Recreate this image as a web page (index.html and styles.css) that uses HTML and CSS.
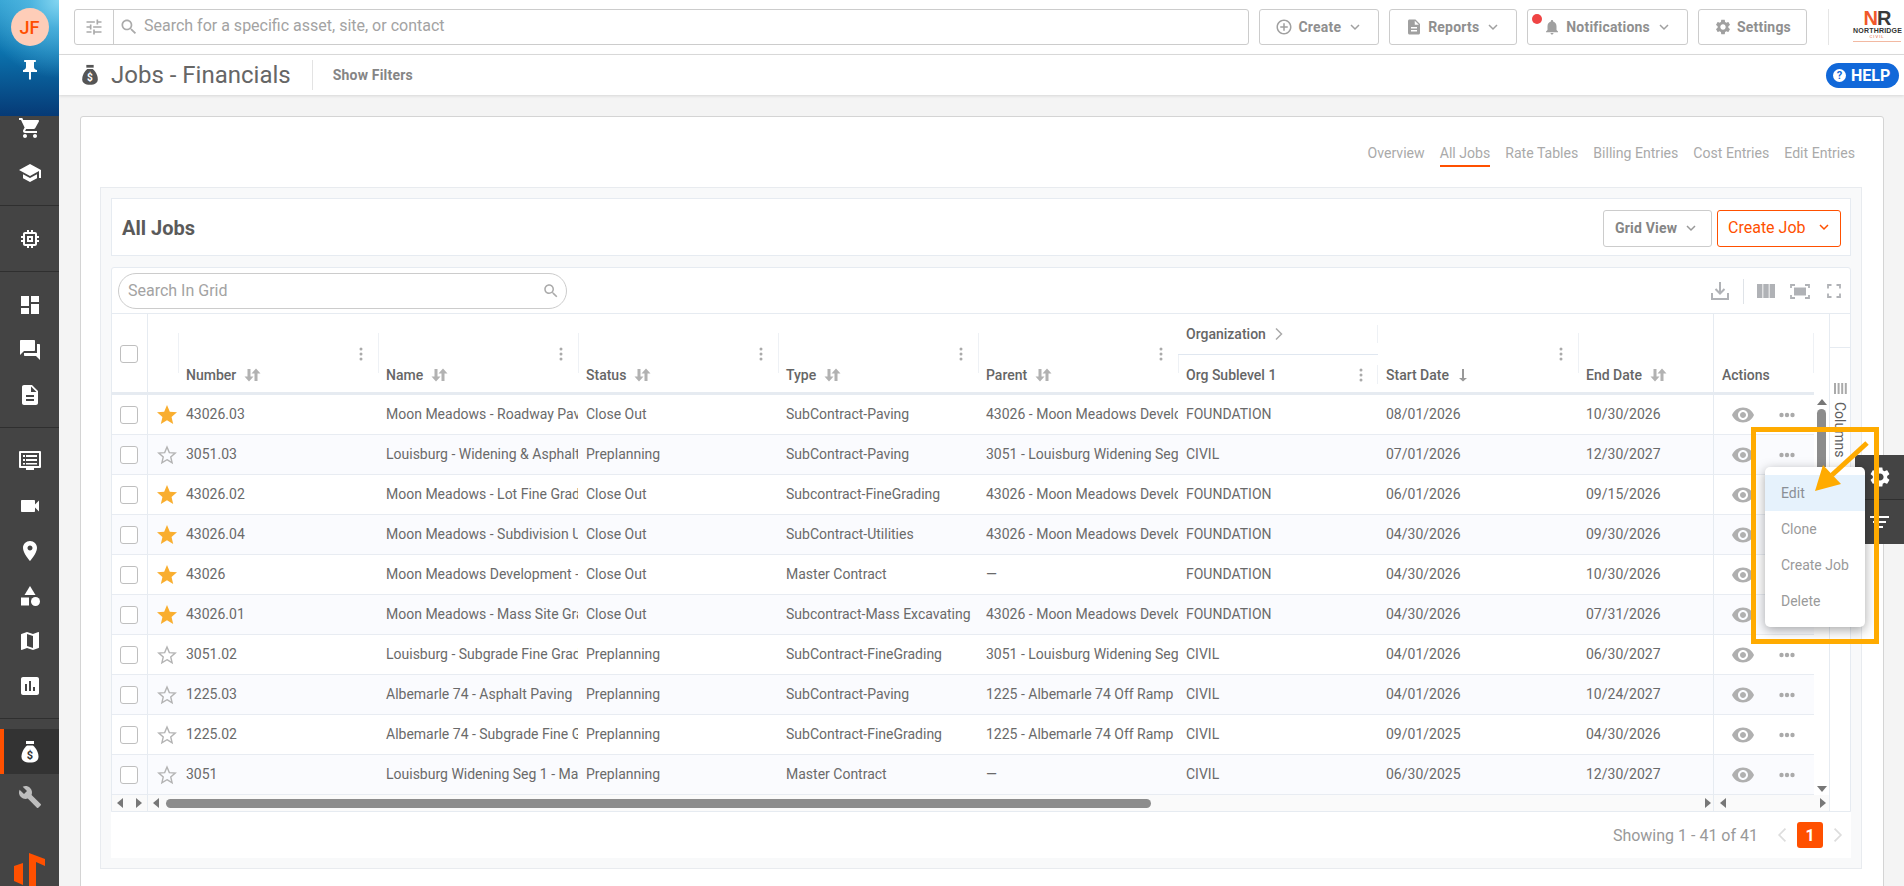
FILE: index.html
```html
<!DOCTYPE html>
<html lang="en">
<head>
<meta charset="UTF-8" />
<meta name="viewport" content="width=device-width, initial-scale=1.0">
<title>Jobs - Financials</title>
<link rel="stylesheet" href="styles.css">
</head>
<body>

<svg class="sprite" xmlns="http://www.w3.org/2000/svg">
  <symbol id="i-cart" viewBox="0 0 24 24"><path d="M7 18c-1.1 0-1.99.9-1.99 2S5.9 22 7 22s2-.9 2-2-.9-2-2-2zM1 2v2h2l3.6 7.59-1.35 2.45c-.16.28-.25.61-.25.96 0 1.1.9 2 2 2h12v-2H7.42c-.14 0-.25-.11-.25-.25l.03-.12.9-1.63h7.45c.75 0 1.41-.41 1.75-1.03l3.58-6.49c.08-.14.12-.31.12-.48 0-.55-.45-1-1-1H5.21l-.94-2H1zm16 16c-1.1 0-1.99.9-1.99 2s.89 2 1.99 2 2-.9 2-2-.9-2-2-2z"/></symbol>
  <symbol id="i-school" viewBox="0 0 24 24"><path d="M5 13.18v4L12 21l7-3.82v-4L12 17l-7-3.82zM12 3L1 9l11 6 9-4.91V17h2V9L12 3z"/></symbol>
  <symbol id="i-chip" viewBox="0 0 24 24"><path d="M15 9H9v6h6V9zm-2 4h-2v-2h2v2zm8-2V9h-2V7c0-1.1-.9-2-2-2h-2V3h-2v2h-2V3H9v2H7c-1.1 0-2 .9-2 2v2H3v2h2v2H3v2h2v2c0 1.1.9 2 2 2h2v2h2v-2h2v2h2v-2h2c1.1 0 2-.9 2-2v-2h2v-2h-2v-2h2zm-4 6H7V7h10v10z"/></symbol>
  <symbol id="i-dash" viewBox="0 0 24 24"><path d="M3 13h8V3H3v10zm0 8h8v-6H3v6zm10 0h8V11h-8v10zm0-18v6h8V3h-8z"/></symbol>
  <symbol id="i-forum" viewBox="0 0 24 24"><path d="M21 6h-2v9H6v2c0 .55.45 1 1 1h11l4 4V7c0-.55-.45-1-1-1zm-4 6V3c0-.55-.45-1-1-1H3c-.55 0-1 .45-1 1v14l4-4h10c.55 0 1-.45 1-1z"/></symbol>
  <symbol id="i-doc" viewBox="0 0 24 24"><path d="M14 2H6c-1.1 0-1.99.9-1.99 2L4 20c0 1.1.89 2 1.99 2H18c1.1 0 2-.9 2-2V8l-6-6zm2 16H8v-2h8v2zm0-4H8v-2h8v2zm-3-5V3.5L18.5 9H13z"/></symbol>
  <symbol id="i-screen" viewBox="0 0 24 24"><path fill-rule="evenodd" d="M2 2h20a1 1 0 0 1 1 1v15a1 1 0 0 1-1 1h-6v2H8v-2H2a1 1 0 0 1-1-1V3a1 1 0 0 1 1-1zm1 2v13h18V4H3z"/><path d="M5 6h2v2H5zM8 6h11v2H8zM5 10h2v2H5zM8 10h11v2H8zM5 14h2v1.5H5zM8 14h11v1.5H8z"/></symbol>
  <symbol id="i-video" viewBox="0 0 24 24"><path d="M17 10.5V7c0-.55-.45-1-1-1H4c-.55 0-1 .45-1 1v10c0 .55.45 1 1 1h12c.55 0 1-.45 1-1v-3.5l4 4v-11l-4 4z"/></symbol>
  <symbol id="i-place" viewBox="0 0 24 24"><path d="M12 2C8.13 2 5 5.13 5 9c0 5.25 7 13 7 13s7-7.75 7-13c0-3.87-3.13-7-7-7zm0 9.5c-1.38 0-2.5-1.12-2.5-2.5s1.12-2.5 2.5-2.5 2.5 1.12 2.5 2.5-1.12 2.5-2.5 2.5z"/></symbol>
  <symbol id="i-shapes" viewBox="0 0 24 24"><path d="M12 2l-5.5 9h11z"/><circle cx="17.5" cy="17.5" r="4.5"/><path d="M3 13.5h8v8H3z"/></symbol>
  <symbol id="i-map" viewBox="0 0 24 24"><path d="M20.5 3l-.16.03L15 5.1 9 3 3.36 4.9c-.21.07-.36.25-.36.48V20.5c0 .28.22.5.5.5l.16-.03L9 18.9l6 2.1 5.64-1.9c.21-.07.36-.25.36-.48V3.5c0-.28-.22-.5-.5-.5zM15 19l-6-2.11V5l6 2.11V19z"/></symbol>
  <symbol id="i-chart" viewBox="0 0 24 24"><path d="M19 3H5c-1.1 0-2 .9-2 2v14c0 1.1.9 2 2 2h14c1.1 0 2-.9 2-2V5c0-1.1-.9-2-2-2zM9 17H7v-7h2v7zm4 0h-2V7h2v10zm4 0h-2v-4h2v4z"/></symbol>
  <symbol id="i-wrench" viewBox="0 0 24 24"><path d="M22.7 19l-9.1-9.1c.9-2.3.4-5-1.5-6.9-2-2-5-2.4-7.4-1.3L9 6 6 9 1.6 4.7C.4 7.1.9 10.1 2.9 12.1c1.9 1.9 4.6 2.4 6.9 1.5l9.1 9.1c.4.4 1 .4 1.4 0l2.3-2.3c.5-.4.5-1.1.1-1.4z"/></symbol>
  <symbol id="i-pin" viewBox="0 0 24 24"><path d="M16 9V4h1c.55 0 1-.45 1-1s-.45-1-1-1H7c-.55 0-1 .45-1 1s.45 1 1 1h1v5c0 1.66-1.34 3-3 3v2h5.97v7l1 1 1-1v-7H19v-2c-1.66 0-3-1.34-3-3z"/></symbol>
  <symbol id="i-bag" viewBox="0 0 24 24"><path d="M8 1h8v3H8z"/><path d="M9 5.5h6c3 2.5 5.5 7 5.5 11 0 4-3 6-8.5 6s-8.5-2-8.5-6c0-4 2.5-8.5 5.5-11z"/><text class="bag-sign" x="12" y="19" text-anchor="middle">$</text></symbol>
  <symbol id="i-tune" viewBox="0 0 24 24"><path d="M3 17v2h6v-2H3zM3 5v2h10V5H3zm10 16v-2h8v-2h-8v-2h-2v6h2zM7 9v2H3v2h4v2h2V9H7zm14 4v-2H11v2h10zm-6-4h2V7h4V5h-4V3h-2v6z"/></symbol>
  <symbol id="i-search" viewBox="0 0 24 24"><path d="M15.5 14h-.79l-.28-.27C15.41 12.59 16 11.11 16 9.5 16 5.91 13.09 3 9.5 3S3 5.91 3 9.5 5.91 16 9.5 16c1.61 0 3.09-.59 4.23-1.57l.27.28v.79l5 4.99L20.49 19l-4.99-5zm-6 0C7.01 14 5 11.99 5 9.5S7.01 5 9.5 5 14 7.01 14 9.5 11.99 14 9.5 14z"/></symbol>
  <symbol id="i-add" viewBox="0 0 24 24"><path d="M13 7h-2v4H7v2h4v4h2v-4h4v-2h-4V7zm-1-5C6.48 2 2 6.48 2 12s4.48 10 10 10 10-4.48 10-10S17.52 2 12 2zm0 18c-4.41 0-8-3.59-8-8s3.59-8 8-8 8 3.59 8 8-3.59 8-8 8z"/></symbol>
  <symbol id="i-bell" viewBox="0 0 24 24"><path d="M12 22c1.1 0 2-.9 2-2h-4c0 1.1.89 2 2 2zm6-6v-5c0-3.07-1.64-5.64-4.5-6.32V4c0-.83-.67-1.5-1.5-1.5s-1.5.67-1.5 1.5v.68C7.63 5.36 6 7.92 6 11v5l-2 2v1h16v-1l-2-2z"/></symbol>
  <symbol id="i-gear" viewBox="0 0 24 24"><path d="M19.14 12.94c.04-.3.06-.61.06-.94 0-.32-.02-.64-.07-.94l2.03-1.58c.18-.14.23-.41.12-.61l-1.92-3.32c-.12-.22-.37-.29-.59-.22l-2.39.96c-.5-.38-1.03-.7-1.62-.94l-.36-2.54c-.04-.24-.24-.41-.48-.41h-3.84c-.24 0-.43.17-.47.41l-.36 2.54c-.59.24-1.13.57-1.62.94l-2.39-.96c-.22-.08-.47 0-.59.22L2.74 8.87c-.12.21-.08.47.12.61l2.03 1.58c-.05.3-.09.63-.09.94s.02.64.07.94l-2.03 1.58c-.18.14-.23.41-.12.61l1.92 3.32c.12.22.37.29.59.22l2.39-.96c.5.38 1.03.7 1.62.94l.36 2.54c.05.24.24.41.48.41h3.84c.24 0 .44-.17.47-.41l.36-2.54c.59-.24 1.13-.56 1.62-.94l2.39.96c.22.08.47 0 .59-.22l1.92-3.32c.12-.22.07-.47-.12-.61l-2.01-1.58zM12 15.6c-1.98 0-3.6-1.62-3.6-3.6s1.62-3.6 3.6-3.6 3.6 1.62 3.6 3.6-1.62 3.6-3.6 3.6z"/></symbol>
  <symbol id="i-chev" viewBox="0 0 12 12"><path d="M2 4l4 4 4-4" fill="none" stroke="currentColor" stroke-width="1.5"/></symbol>
  <symbol id="i-eye" viewBox="0 0 24 24"><path d="M12 4.5C7 4.5 2.73 7.61 1 12c1.73 4.39 6 7.5 11 7.5s9.27-3.11 11-7.5c-1.73-4.39-6-7.5-11-7.5zM12 17c-2.76 0-5-2.24-5-5s2.24-5 5-5 5 2.24 5 5-2.24 5-5 5zm0-8c-1.66 0-3 1.34-3 3s1.34 3 3 3 3-1.34 3-3-1.34-3-3-3z"/></symbol>
  <symbol id="i-star" viewBox="0 0 24 24"><path d="M12 17.27L18.18 21l-1.64-7.03L22 9.24l-7.19-.61L12 2 9.19 8.63 2 9.24l5.46 4.73L5.82 21z"/></symbol>
  <symbol id="i-star-o" viewBox="0 0 24 24"><path d="M12 16.7L17.1 19.8l-1.35-5.8 4.5-3.9-5.93-.5L12 4.1 9.68 9.6l-5.93.5 4.5 3.9-1.35 5.8z" fill="none" stroke="currentColor" stroke-width="1.4"/></symbol>
  <symbol id="i-more" viewBox="0 0 16 6"><circle cx="2.5" cy="3" r="2.2"/><circle cx="8" cy="3" r="2.2"/><circle cx="13.5" cy="3" r="2.2"/></symbol>
  <symbol id="i-vdots" viewBox="0 0 4 14"><circle cx="2" cy="2" r="1.5"/><circle cx="2" cy="7" r="1.5"/><circle cx="2" cy="12" r="1.5"/></symbol>
  <symbol id="i-sort" viewBox="0 0 17 14"><path d="M3.5 1h3v7.5h3L5 13.5.5 8.5h3zM10.5 13h3V5.500h3L12 .5 7.500 5.500h3z"/></symbol>
  <symbol id="i-down" viewBox="0 0 12 14"><path d="M5 1h2v9h3l-4 3.500L2 10h3z"/></symbol>
  <symbol id="i-right" viewBox="0 0 10 14"><path d="M2 1.500L7.500 7 2 12.500" fill="none" stroke="currentColor" stroke-width="1.500"/></symbol>
  <symbol id="i-left" viewBox="0 0 10 14"><path d="M8 1.500L2.500 7 8 12.500" fill="none" stroke="currentColor" stroke-width="1.500"/></symbol>
  <symbol id="i-columns" viewBox="0 0 18 14"><path d="M0 0h5.400v14H0zM6.300 0h5.400v14H6.300zM12.600 0H18v14h-5.400z"/></symbol>
  <symbol id="i-download" viewBox="0 0 20 20"><path d="M10 1v11M5.500 8l4.500 4.500L14.500 8" fill="none" stroke="currentColor" stroke-width="2"/><path d="M2 12v6h16v-6" fill="none" stroke="currentColor" stroke-width="2"/></symbol>
  <symbol id="i-fit" viewBox="0 0 20 15"><path d="M1 4V1h4M15 1h4v3M19 11v3h-4M5 14H1v-3" fill="none" stroke="currentColor" stroke-width="1.800"/><path d="M4 3.500h12v8H4z"/></symbol>
  <symbol id="i-full" viewBox="0 0 14 14"><path d="M1 4.500V1h3.500M9.500 1H13v3.500M13 9.500V13H9.500M4.500 13H1V9.500" fill="none" stroke="currentColor" stroke-width="1.800"/></symbol>
  <symbol id="i-bars" viewBox="0 0 13 11"><path d="M0 0h2v11H0zM3.600 0h2v11h-2zM7.200 0h2v11h-2zM10.800 0h2v11h-2z"/></symbol>
</svg>

<!-- Side nav -->
<nav class="sidebar">
  <div class="side-top">
    <div class="avatar">JF</div>
    <svg class="side-pin"><use href="#i-pin"/></svg>
  </div>
  <div class="side-group">
    <svg class="side-icon"><use href="#i-cart"/></svg>
    <svg class="side-icon"><use href="#i-school"/></svg>
  </div>
  <div class="side-group">
    <svg class="side-icon"><use href="#i-chip"/></svg>
  </div>
  <div class="side-group">
    <svg class="side-icon"><use href="#i-dash"/></svg>
    <svg class="side-icon"><use href="#i-forum"/></svg>
    <svg class="side-icon"><use href="#i-doc"/></svg>
  </div>
  <div class="side-group">
    <svg class="side-icon"><use href="#i-screen"/></svg>
    <svg class="side-icon"><use href="#i-video"/></svg>
    <svg class="side-icon"><use href="#i-place"/></svg>
    <svg class="side-icon"><use href="#i-shapes"/></svg>
    <svg class="side-icon"><use href="#i-map"/></svg>
    <svg class="side-icon"><use href="#i-chart"/></svg>
  </div>
  <div class="side-last">
    <div class="side-active"><svg class="side-icon"><use href="#i-bag"/></svg></div>
    <svg class="side-icon side-wrench"><use href="#i-wrench"/></svg>
  </div>
  <svg class="side-logo" viewBox="0 0 59 33"><path d="M14 13l9-3v22l-9-4zM29 0l16 6v7l-9-4v24h-7z"/></svg>
</nav>

<div class="main">
  <!-- Top bar -->
  <header class="topbar">
    <div class="global-search">
      <div class="tune-cell"><svg class="tune"><use href="#i-tune"/></svg></div>
      <svg class="search-icon"><use href="#i-search"/></svg>
      <span>Search for a specific asset, site, or contact</span>
    </div>
    <button class="top-btn"><svg><use href="#i-add"/></svg>Create<svg class="chev"><use href="#i-chev"/></svg></button>
    <button class="top-btn"><svg><use href="#i-doc"/></svg>Reports<svg class="chev"><use href="#i-chev"/></svg></button>
    <button class="top-btn notif"><span class="red-dot"></span><svg><use href="#i-bell"/></svg>Notifications<svg class="chev"><use href="#i-chev"/></svg></button>
    <button class="top-btn settings"><svg><use href="#i-gear"/></svg>Settings</button>
    <div class="top-sep"></div>
    <div class="brand">
      <div class="brand-nr"><span class="brand-n">N</span><span>R</span></div>
      <div class="brand-name">NORTHRIDGE</div>
      <div class="brand-civil">CIVIL</div>
    </div>
  </header>

  <!-- Page title -->
  <div class="subheader">
    <svg class="title-icon"><use href="#i-bag"/></svg>
    <h1>Jobs - Financials</h1>
    <div class="sub-sep"></div>
    <span class="show-filters">Show Filters</span>
    <div class="help"><span class="help-mark">?</span>HELP</div>
  </div>

  <div class="content">
    <div class="card">
      <div class="tabs">
        <span>Overview</span>
        <span class="tab-active">All Jobs</span>
        <span>Rate Tables</span>
        <span>Billing Entries</span>
        <span>Cost Entries</span>
        <span>Edit Entries</span>
      </div>

      <div class="panel">
        <div class="panel-head">
          <h2>All Jobs</h2>
          <div class="panel-actions">
            <button class="grid-view">Grid View<svg class="chev"><use href="#i-chev"/></svg></button>
            <button class="create-job">Create Job<svg class="chev"><use href="#i-chev"/></svg></button>
          </div>
        </div>

        <div class="grid">
          <div class="grid-tools">
            <div class="grid-search">
              <span>Search In Grid</span>
              <svg><use href="#i-search"/></svg>
            </div>
            <div class="tool-icons">
              <svg class="t-download"><use href="#i-download"/></svg>
              <div class="tool-sep"></div>
              <svg class="t-columns"><use href="#i-columns"/></svg>
              <svg class="t-fit"><use href="#i-fit"/></svg>
              <svg class="t-full"><use href="#i-full"/></svg>
            </div>
          </div>

          <div class="grid-body">
            <div class="grid-main">
              <div class="grid-upper">
                <div class="table">
                  <div class="thead">
                    <div class="hcell-check"><span class="check"></span></div>
                    <div class="hcell-star"></div>
                    <div class="hcell"><span>Number</span><svg class="sort"><use href="#i-sort"/></svg><svg class="vdots"><use href="#i-vdots"/></svg></div>
                    <div class="hcell"><span>Name</span><svg class="sort"><use href="#i-sort"/></svg><svg class="vdots"><use href="#i-vdots"/></svg></div>
                    <div class="hcell"><span>Status</span><svg class="sort"><use href="#i-sort"/></svg><svg class="vdots"><use href="#i-vdots"/></svg></div>
                    <div class="hcell"><span>Type</span><svg class="sort"><use href="#i-sort"/></svg><svg class="vdots"><use href="#i-vdots"/></svg></div>
                    <div class="hcell"><span>Parent</span><svg class="sort"><use href="#i-sort"/></svg><svg class="vdots"><use href="#i-vdots"/></svg></div>
                    <div class="hcell-org">
                      <div class="org-group"><span>Organization</span><svg><use href="#i-right"/></svg></div>
                      <div class="org-sub"><span>Org Sublevel 1</span><svg class="vdots"><use href="#i-vdots"/></svg></div>
                    </div>
                    <div class="hcell no-line"><span>Start Date</span><svg class="sort-down"><use href="#i-down"/></svg><svg class="vdots"><use href="#i-vdots"/></svg></div>
                    <div class="hcell"><span>End Date</span><svg class="sort"><use href="#i-sort"/></svg></div>
                    <div class="hcell-actions"><span>Actions</span></div>
                  </div>

                  <div class="row">
                    <div class="cell-check"><span class="check"></span></div>
                    <div class="cell-star"><svg class="star"><use href="#i-star"/></svg></div>
                    <div class="cell">43026.03</div>
                    <div class="cell">Moon Meadows - Roadway Paving</div>
                    <div class="cell">Close Out</div>
                    <div class="cell">SubContract-Paving</div>
                    <div class="cell">43026 - Moon Meadows Development</div>
                    <div class="cell">FOUNDATION</div>
                    <div class="cell">08/01/2026</div>
                    <div class="cell">10/30/2026</div>
                    <div class="cell-actions"><svg class="eye"><use href="#i-eye"/></svg><svg class="more"><use href="#i-more"/></svg></div>
                  </div>
                  <div class="row alt">
                    <div class="cell-check"><span class="check"></span></div>
                    <div class="cell-star"><svg class="star-o"><use href="#i-star-o"/></svg></div>
                    <div class="cell">3051.03</div>
                    <div class="cell">Louisburg - Widening &amp; Asphalt Paving</div>
                    <div class="cell">Preplanning</div>
                    <div class="cell">SubContract-Paving</div>
                    <div class="cell">3051 - Louisburg Widening Seg 1</div>
                    <div class="cell">CIVIL</div>
                    <div class="cell">07/01/2026</div>
                    <div class="cell">12/30/2027</div>
                    <div class="cell-actions"><svg class="eye"><use href="#i-eye"/></svg><svg class="more"><use href="#i-more"/></svg></div>
                  </div>
                  <div class="row">
                    <div class="cell-check"><span class="check"></span></div>
                    <div class="cell-star"><svg class="star"><use href="#i-star"/></svg></div>
                    <div class="cell">43026.02</div>
                    <div class="cell">Moon Meadows - Lot Fine Grading</div>
                    <div class="cell">Close Out</div>
                    <div class="cell">Subcontract-FineGrading</div>
                    <div class="cell">43026 - Moon Meadows Development</div>
                    <div class="cell">FOUNDATION</div>
                    <div class="cell">06/01/2026</div>
                    <div class="cell">09/15/2026</div>
                    <div class="cell-actions"><svg class="eye"><use href="#i-eye"/></svg><svg class="more"><use href="#i-more"/></svg></div>
                  </div>
                  <div class="row alt">
                    <div class="cell-check"><span class="check"></span></div>
                    <div class="cell-star"><svg class="star"><use href="#i-star"/></svg></div>
                    <div class="cell">43026.04</div>
                    <div class="cell">Moon Meadows - Subdivision Utilities</div>
                    <div class="cell">Close Out</div>
                    <div class="cell">SubContract-Utilities</div>
                    <div class="cell">43026 - Moon Meadows Development</div>
                    <div class="cell">FOUNDATION</div>
                    <div class="cell">04/30/2026</div>
                    <div class="cell">09/30/2026</div>
                    <div class="cell-actions"><svg class="eye"><use href="#i-eye"/></svg><svg class="more"><use href="#i-more"/></svg></div>
                  </div>
                  <div class="row">
                    <div class="cell-check"><span class="check"></span></div>
                    <div class="cell-star"><svg class="star"><use href="#i-star"/></svg></div>
                    <div class="cell">43026</div>
                    <div class="cell">Moon Meadows Development - Master</div>
                    <div class="cell">Close Out</div>
                    <div class="cell">Master Contract</div>
                    <div class="cell">—</div>
                    <div class="cell">FOUNDATION</div>
                    <div class="cell">04/30/2026</div>
                    <div class="cell">10/30/2026</div>
                    <div class="cell-actions"><svg class="eye"><use href="#i-eye"/></svg><svg class="more"><use href="#i-more"/></svg></div>
                  </div>
                  <div class="row alt">
                    <div class="cell-check"><span class="check"></span></div>
                    <div class="cell-star"><svg class="star"><use href="#i-star"/></svg></div>
                    <div class="cell">43026.01</div>
                    <div class="cell">Moon Meadows - Mass Site Grading</div>
                    <div class="cell">Close Out</div>
                    <div class="cell">Subcontract-Mass Excavating</div>
                    <div class="cell">43026 - Moon Meadows Development</div>
                    <div class="cell">FOUNDATION</div>
                    <div class="cell">04/30/2026</div>
                    <div class="cell">07/31/2026</div>
                    <div class="cell-actions"><svg class="eye"><use href="#i-eye"/></svg><svg class="more"><use href="#i-more"/></svg></div>
                  </div>
                  <div class="row">
                    <div class="cell-check"><span class="check"></span></div>
                    <div class="cell-star"><svg class="star-o"><use href="#i-star-o"/></svg></div>
                    <div class="cell">3051.02</div>
                    <div class="cell">Louisburg - Subgrade Fine Grading</div>
                    <div class="cell">Preplanning</div>
                    <div class="cell">SubContract-FineGrading</div>
                    <div class="cell">3051 - Louisburg Widening Seg 1</div>
                    <div class="cell">CIVIL</div>
                    <div class="cell">04/01/2026</div>
                    <div class="cell">06/30/2027</div>
                    <div class="cell-actions"><svg class="eye"><use href="#i-eye"/></svg><svg class="more"><use href="#i-more"/></svg></div>
                  </div>
                  <div class="row alt">
                    <div class="cell-check"><span class="check"></span></div>
                    <div class="cell-star"><svg class="star-o"><use href="#i-star-o"/></svg></div>
                    <div class="cell">1225.03</div>
                    <div class="cell">Albemarle 74 - Asphalt Paving</div>
                    <div class="cell">Preplanning</div>
                    <div class="cell">SubContract-Paving</div>
                    <div class="cell">1225 - Albemarle 74 Off Ramp</div>
                    <div class="cell">CIVIL</div>
                    <div class="cell">04/01/2026</div>
                    <div class="cell">10/24/2027</div>
                    <div class="cell-actions"><svg class="eye"><use href="#i-eye"/></svg><svg class="more"><use href="#i-more"/></svg></div>
                  </div>
                  <div class="row">
                    <div class="cell-check"><span class="check"></span></div>
                    <div class="cell-star"><svg class="star-o"><use href="#i-star-o"/></svg></div>
                    <div class="cell">1225.02</div>
                    <div class="cell">Albemarle 74 - Subgrade Fine Grading</div>
                    <div class="cell">Preplanning</div>
                    <div class="cell">SubContract-FineGrading</div>
                    <div class="cell">1225 - Albemarle 74 Off Ramp</div>
                    <div class="cell">CIVIL</div>
                    <div class="cell">09/01/2025</div>
                    <div class="cell">04/30/2026</div>
                    <div class="cell-actions"><svg class="eye"><use href="#i-eye"/></svg><svg class="more"><use href="#i-more"/></svg></div>
                  </div>
                  <div class="row alt">
                    <div class="cell-check"><span class="check"></span></div>
                    <div class="cell-star"><svg class="star-o"><use href="#i-star-o"/></svg></div>
                    <div class="cell">3051</div>
                    <div class="cell">Louisburg Widening Seg 1 - Master</div>
                    <div class="cell">Preplanning</div>
                    <div class="cell">Master Contract</div>
                    <div class="cell">—</div>
                    <div class="cell">CIVIL</div>
                    <div class="cell">06/30/2025</div>
                    <div class="cell">12/30/2027</div>
                    <div class="cell-actions"><svg class="eye"><use href="#i-eye"/></svg><svg class="more"><use href="#i-more"/></svg></div>
                  </div>
                </div>

                <div class="vscroll">
                  <span class="tri-up"></span>
                  <span class="vthumb"></span>
                  <span class="tri-down"></span>
                </div>
              </div>

              <div class="hscroll">
                <div class="hs-pin"><span class="tri-left"></span><span class="tri-right"></span></div>
                <div class="hs-center"><span class="tri-left"></span><span class="hthumb"></span><span class="tri-right"></span></div>
                <div class="hs-actions"><span class="tri-left"></span><span class="tri-right"></span></div>
              </div>
            </div>

            <div class="columns-panel">
              <div class="columns-tab">
                <svg><use href="#i-bars"/></svg>
                <span>Columns</span>
              </div>
            </div>
          </div>
        </div>

        <div class="grid-footer">
          <span class="showing">Showing 1 - 41 of 41</span>
          <svg class="page-arrow"><use href="#i-left"/></svg>
          <span class="page-num">1</span>
          <svg class="page-arrow"><use href="#i-right"/></svg>
        </div>
      </div>
    </div>
  </div>
</div>

<!-- Floating bits -->
<div class="side-tabs">
  <div class="side-tab"><svg class="side-gear"><use href="#i-gear"/></svg></div>
  <div class="side-tab">
    <div class="filter-lines"><span></span><span></span><span></span></div>
  </div>
</div>

<div class="row-menu">
  <div class="menu-item menu-hover">Edit</div>
  <div class="menu-item">Clone</div>
  <div class="menu-item">Create Job</div>
  <div class="menu-item">Delete</div>
</div>

<div class="callout-box"></div>
<svg class="callout-arrow" viewBox="0 0 1904 886">
  <path d="M1867 443L1832 475" stroke="#ffab00" stroke-width="5" fill="none"/>
  <path d="M1815 491l26-7-18-19z" fill="#ffab00"/>
</svg>

</body>
</html>
```

FILE: styles.css
```css
* {
  box-sizing: border-box;
  margin: 0;
  padding: 0;
}
html, body {
  height: 100%;
}
body {
  font-family: Roboto, 'Open Sans', sans-serif;
  font-size: 14px;
  color: #666;
  background: #f4f4f4;
  display: flex;
  overflow: hidden;
}
button {
  font-family: inherit;
  background: #fff;
  cursor: pointer;
}
svg {
  fill: currentColor;
  flex: none;
}
.sprite {
  display: none;
}
.chev {
  width: 12px;
  height: 12px;
}

/* side nav */
.sidebar {
  width: 59px;
  flex: none;
  height: 100vh;
  background: #444;
  color: #fff;
  display: flex;
  flex-direction: column;
  overflow: hidden;
}
.side-top {
  height: 116px;
  flex: none;
  display: flex;
  flex-direction: column;
  align-items: center;
  padding-top: 8px;
  background:
    radial-gradient(circle at 100% 0, #84d6f1 0, rgba(90, 190, 230, 0.7) 22%, rgba(20, 130, 190, 0) 60%),
    linear-gradient(180deg, #2f9fd0 0%, #0b72ad 45%, #063a76 100%);
}
.avatar {
  width: 38px;
  height: 38px;
  border-radius: 50%;
  background: #fecdb8;
  color: #ff4f00;
  font-size: 18px;
  font-weight: 500;
  display: flex;
  align-items: center;
  justify-content: center;
}
.side-pin {
  width: 24px;
  height: 24px;
  margin-top: 12px;
}
.side-group {
  display: flex;
  flex-direction: column;
  align-items: center;
  gap: 21px;
  padding: 21px 0 20px;
  border-bottom: 1px solid #2f2f2f;
}
.side-top + .side-group {
  padding-top: 0;
}
.side-icon {
  width: 24px;
  height: 24px;
  --bag-sign: #444;
}
.side-last {
  display: flex;
  flex-direction: column;
  align-items: center;
  padding-top: 10px;
}
.side-active {
  width: 100%;
  height: 45px;
  background: #333;
  border-left: 4px solid #ff5000;
  display: flex;
  align-items: center;
  justify-content: center;
  padding-right: 4px;
}
.side-active .side-icon {
  --bag-sign: #333;
}
.side-wrench {
  margin-top: 11px;
  color: #bdbdbd;
}
.side-logo {
  width: 59px;
  height: 33px;
  margin-top: auto;
  color: #ff5000;
}
.bag-sign {
  fill: var(--bag-sign, #fff);
  font-family: Roboto, sans-serif;
  font-size: 11px;
  font-weight: 700;
}

/* top bar */
.main {
  flex: 1;
  min-width: 0;
  height: 100vh;
  display: flex;
  flex-direction: column;
  overflow: hidden;
}
.topbar {
  height: 55px;
  flex: none;
  background: #fff;
  border-bottom: 1px solid #ddd;
  display: flex;
  align-items: center;
  gap: 10px;
  padding: 0 3px 1px 15px;
}
.global-search {
  flex: 1;
  height: 36px;
  border: 1px solid #ccc;
  border-radius: 3px;
  display: flex;
  align-items: center;
  font-size: 16px;
  color: #a3a3a3;
}
.global-search span {
  padding-bottom: 2px;
}
.tune-cell {
  width: 39px;
  height: 100%;
  border-right: 1px solid #ccc;
  display: flex;
  align-items: center;
  justify-content: center;
}
.tune {
  width: 20px;
  height: 20px;
  color: #aaa;
}
.search-icon {
  width: 20px;
  height: 20px;
  margin: 0 5px;
  color: #aaa;
}
.top-btn {
  position: relative;
  height: 36px;
  border: 1px solid #ccc;
  border-radius: 3px;
  display: flex;
  align-items: center;
  gap: 5px;
  padding: 0 17px 0 15px;
  font-size: 14px;
  font-weight: 700;
  letter-spacing: 0.2px;
  color: #8f8f8f;
}
.top-btn svg {
  width: 18px;
  height: 18px;
  color: #a0a0a0;
}
.top-btn .chev {
  width: 12px;
  height: 12px;
  margin-left: 3px;
}
.settings {
  padding-right: 15px;
}
.red-dot {
  position: absolute;
  left: 4px;
  top: 4px;
  width: 10px;
  height: 10px;
  border-radius: 50%;
  background: #ef4444;
}
.top-sep {
  width: 1px;
  height: 36px;
  background: #e5e5e5;
  margin: 0 14px 0 11px;
}
.brand {
  width: 48px;
  text-align: center;
  line-height: 1;
  font-family: 'Liberation Sans', sans-serif;
}
.brand-nr {
  font-size: 20px;
  font-weight: 700;
  height: 15px;
  line-height: 15px;
  color: #3a3a3a;
  letter-spacing: -1px;
}
.brand-n {
  color: #f0582a;
}
.brand-name {
  font-size: 7px;
  font-weight: 700;
  color: #333;
  margin-top: 1px;
  white-space: nowrap;
  letter-spacing: 0.2px;
}
.brand-civil {
  font-size: 4px;
  color: #e8552a;
  letter-spacing: 1px;
  margin-top: 1px;
  border-bottom: 1px solid #f2b9a2;
  padding-bottom: 2px;
}

/* page title */
.subheader {
  height: 40px;
  flex: none;
  background: #fff;
  display: flex;
  align-items: center;
  padding: 0 5px 0 20px;
  box-shadow: 0 1px 3px rgba(0, 0, 0, 0.12);
  position: relative;
}
.title-icon {
  width: 22px;
  height: 22px;
  color: #555;
  --bag-sign: #fff;
}
h1 {
  font-size: 24px;
  font-weight: 400;
  color: #666;
  margin-left: 10px;
}
.sub-sep {
  width: 1px;
  height: 30px;
  background: #e3e3e3;
  margin: 0 20px 0 21px;
}
.show-filters {
  font-weight: 700;
  letter-spacing: 0.2px;
  color: #858585;
}
.help {
  margin-left: auto;
  width: 73px;
  height: 25px;
  border-radius: 13px;
  background: #1168d9;
  color: #fff;
  font-size: 16px;
  font-weight: 700;
  display: flex;
  align-items: center;
  padding-left: 7px;
  gap: 5px;
}
.help-mark {
  width: 13px;
  height: 13px;
  border-radius: 50%;
  background: #fff;
  color: #1168d9;
  font-size: 11px;
  display: flex;
  align-items: center;
  justify-content: center;
}

/* card */
.content {
  flex: 1;
  padding: 21px 20px 0 21px;
  overflow: hidden;
}
.card {
  background: #fff;
  border: 1px solid #d4d4d4;
  border-radius: 3px;
  min-height: 800px;
  padding: 0 21px 0 19px;
}
.tabs {
  height: 70px;
  display: flex;
  justify-content: flex-end;
  align-items: flex-start;
  gap: 15px;
  padding: 26px 7px 0 0;
  color: #aaa;
  font-size: 14.1px;
}
.tabs span {
  line-height: 20px;
  padding-bottom: 2px;
  border-bottom: 2px solid transparent;
}
.tabs .tab-active {
  border-bottom-color: #ff5000;
}
.panel {
  background: #f8f9fa;
  border: 1px solid #e8ebef;
  padding: 10px;
}
.panel-head {
  height: 58px;
  background: #fff;
  border: 1px solid #e6ebf1;
  display: flex;
  align-items: center;
  justify-content: space-between;
  padding: 2px 9px 0 10px;
}
h2 {
  font-size: 20px;
  font-weight: 700;
  color: #5a5a5a;
}
.panel-actions {
  display: flex;
  gap: 5px;
}
.grid-view {
  width: 109px;
  height: 37px;
  border: 1px solid #ccc;
  border-radius: 3px;
  font-size: 14px;
  font-weight: 700;
  letter-spacing: 0.2px;
  color: #858585;
  display: flex;
  align-items: center;
  gap: 8px;
  padding-left: 11px;
}
.grid-view .chev {
  color: #999;
}
.create-job {
  width: 124px;
  height: 37px;
  border: 1px solid #ff5000;
  border-radius: 3px;
  font-size: 16px;
  color: #ff5000;
  display: flex;
  align-items: center;
  gap: 12px;
  padding: 0 0 2px 10px;
}

/* grid */
.grid {
  margin-top: 11px;
  background: #fff;
  border: 1px solid #e6ebf1;
  border-radius: 3px 3px 0 0;
}
.grid-tools {
  height: 46px;
  border-bottom: 1px solid #e6ebf1;
  display: flex;
  justify-content: space-between;
  padding: 5px 9px 0 6px;
}
.grid-search {
  width: 449px;
  height: 36px;
  border: 1px solid #ccc;
  border-radius: 18px;
  display: flex;
  align-items: center;
  justify-content: space-between;
  padding: 0 6px 0 9px;
  font-size: 16px;
  color: #a3a3a3;
}
.grid-search span {
  padding-bottom: 2px;
}
.grid-search svg {
  width: 18px;
  height: 18px;
  color: #aaa;
}
.tool-icons {
  display: flex;
  align-items: center;
  height: 36px;
  color: #b0b2b6;
}
.t-download {
  width: 20px;
  height: 20px;
}
.tool-sep {
  width: 1px;
  height: 25px;
  background: #dfe3e8;
  margin: 0 13px;
}
.t-columns {
  width: 18px;
  height: 14px;
}
.t-fit {
  width: 20px;
  height: 15px;
  margin-left: 15px;
}
.t-full {
  width: 14px;
  height: 14px;
  margin-left: 17px;
}
.grid-body {
  display: flex;
}
.grid-main {
  width: 1717px;
  flex: none;
}
.grid-upper {
  display: flex;
}
.table {
  width: 1702px;
  flex: none;
}
.thead, .row {
  display: grid;
  grid-template-columns: 36px 30px repeat(7, 200px) 135px 101px;
}
.thead {
  height: 81px;
  border-bottom: 3px solid #e6ebf1;
}
.hcell-check {
  border-right: 1px solid #e6ebf1;
  padding: 31px 0 0 8px;
}
.hcell, .hcell-actions {
  position: relative;
  display: flex;
  align-items: flex-end;
  gap: 8px;
  padding: 0 0 7px 8px;
  font-weight: 500;
  line-height: 20px;
}
.hcell::before {
  content: '';
  position: absolute;
  left: 0;
  top: 19px;
  width: 1px;
  height: 40px;
  background: #eef1f5;
}
.hcell.no-line::before {
  display: none;
}
.hcell-actions {
  border-left: 1px solid #e6ebf1;
}
.hcell-actions::after {
  content: '';
  position: absolute;
  right: 0;
  top: 19px;
  width: 1px;
  height: 40px;
  background: #eef1f5;
}
.sort {
  width: 17px;
  height: 14px;
  margin-bottom: 3px;
  color: #b2b2b2;
}
.sort-down {
  width: 12px;
  height: 14px;
  margin-bottom: 3px;
  color: #999;
}
.vdots {
  position: absolute;
  right: 15px;
  top: 33px;
  width: 4px;
  height: 14px;
  color: #aaa;
}
.hcell-org {
  position: relative;
  display: flex;
  flex-direction: column;
  font-weight: 500;
}
.hcell-org::before {
  content: '';
  position: absolute;
  left: 0;
  top: 40px;
  width: 1px;
  height: 19px;
  background: #eef1f5;
}
.org-group {
  position: relative;
  height: 41px;
  flex: none;
  border-bottom: 1px solid #e0e7f0;
  display: flex;
  align-items: center;
  gap: 8px;
  padding-left: 8px;
}
.org-group::after {
  content: '';
  position: absolute;
  right: 0;
  top: 11px;
  width: 1px;
  height: 18px;
  background: #eef1f5;
}
.org-group svg {
  width: 10px;
  height: 14px;
  color: #aaa;
}
.org-sub {
  position: relative;
  flex: 1;
  display: flex;
  align-items: flex-end;
  padding: 0 0 7px 8px;
  line-height: 20px;
}
.org-sub::after {
  content: '';
  position: absolute;
  right: 0;
  top: 10px;
  width: 1px;
  height: 19px;
  background: #eef1f5;
}
.org-sub .vdots {
  top: 13px;
}
.row {
  height: 40px;
  border-bottom: 1px solid #e8ecf2;
  background: #fff;
}
.row.alt {
  background: #fafbfe;
}
.cell {
  display: flex;
  align-items: center;
  padding: 0 0 2px 8px;
  white-space: nowrap;
  overflow: hidden;
  color: #6a6a6a;
}
.cell-check {
  border-right: 1px solid #e6ebf1;
  display: flex;
  align-items: center;
  padding-left: 8px;
}
.check {
  display: block;
  width: 18px;
  height: 18px;
  border: 1.5px solid #bfbfbf;
  border-radius: 3px;
  background: #fff;
}
.cell-star {
  display: flex;
  align-items: center;
  padding-left: 7px;
}
.star {
  width: 24px;
  height: 24px;
  color: #f9ae2f;
}
.star-o {
  width: 24px;
  height: 24px;
  color: #b3b3b3;
}
.cell-actions {
  border-left: 1px solid #e6ebf1;
  display: flex;
  align-items: center;
  padding-left: 17px;
}
.eye {
  width: 24px;
  height: 24px;
  color: #b0b0b0;
}
.more {
  width: 16px;
  height: 6px;
  margin-left: 24px;
  color: #aaa;
}

/* scrollbars */
.vscroll {
  flex: 1;
  display: flex;
  flex-direction: column;
  align-items: center;
  padding: 85px 0 3px;
}
.tri-up {
  border: 5px solid transparent;
  border-top: 0;
  border-bottom: 6px solid #777;
}
.tri-down {
  border: 5px solid transparent;
  border-bottom: 0;
  border-top: 6px solid #777;
  margin-top: auto;
}
.vthumb {
  width: 9px;
  height: 100px;
  border-radius: 5px;
  background: #8c8c8c;
  margin-top: 4px;
}
.hscroll {
  height: 16px;
  display: flex;
  align-items: center;
  background: #fafafa;
}
.tri-left {
  flex: none;
  border: 5px solid transparent;
  border-left: 0;
  border-right: 6px solid #777;
}
.tri-right {
  flex: none;
  border: 5px solid transparent;
  border-right: 0;
  border-left: 6px solid #777;
}
.hs-pin {
  width: 36px;
  height: 100%;
  display: flex;
  align-items: center;
  justify-content: space-between;
  padding: 0 5px;
  border-right: 1px solid #e6ebf1;
}
.hs-center {
  width: 1565px;
  display: flex;
  align-items: center;
  padding: 0 2px 0 5px;
}
.hthumb {
  width: 985px;
  height: 9px;
  border-radius: 5px;
  background: #8c8c8c;
  margin: 0 auto 0 7px;
}
.hs-actions {
  flex: 1;
  height: 100%;
  display: flex;
  align-items: center;
  justify-content: space-between;
  padding: 0 3px 0 6px;
  border-left: 1px solid #e6ebf1;
}
.columns-panel {
  flex: 1;
  border-left: 1px solid #e6ebf1;
  padding-top: 33px;
}
.columns-tab {
  border-top: 1px solid #e6ebf1;
  display: flex;
  flex-direction: column;
  align-items: center;
  padding-top: 35px;
  gap: 8px;
}
.columns-tab svg {
  width: 13px;
  height: 11px;
  color: #aaa;
}
.columns-tab span {
  writing-mode: vertical-rl;
  line-height: 20px;
  color: #5f5f5f;
}
.grid-footer {
  height: 46px;
  background: #fff;
  display: flex;
  align-items: center;
  justify-content: flex-end;
  padding-right: 7px;
}
.showing {
  font-size: 16px;
  color: #999;
  margin-right: 18px;
}
.page-arrow {
  width: 12px;
  height: 16px;
  color: #ddd;
}
.page-num {
  width: 26px;
  height: 26px;
  margin: 0 9px;
  border-radius: 3px;
  background: #ff5000;
  color: #fff;
  font-size: 16px;
  font-weight: 700;
  display: flex;
  align-items: center;
  justify-content: center;
}

/* floating */
.side-tabs {
  position: absolute;
  left: 1855px;
  top: 455px;
  width: 49px;
  height: 89px;
  background: #444;
  border-radius: 3px 0 0 3px;
}
.side-tab {
  height: 44px;
  display: flex;
  align-items: center;
  justify-content: center;
  color: #fff;
}
.side-tab + .side-tab {
  height: 45px;
  border-top: 1px solid #2f2f2f;
}
.side-gear {
  width: 24px;
  height: 24px;
}
.filter-lines {
  display: flex;
  flex-direction: column;
  align-items: center;
  gap: 3px;
}
.filter-lines span {
  display: block;
  height: 2px;
  background: #fff;
  width: 19px;
}
.filter-lines span:nth-child(2) {
  width: 13px;
}
.filter-lines span:nth-child(3) {
  width: 6px;
}
.row-menu {
  position: absolute;
  left: 1765px;
  top: 467px;
  width: 100px;
  height: 160px;
  padding-top: 8px;
  background: #fff;
  border-radius: 5px;
  box-shadow: 0 3px 12px rgba(0, 0, 0, 0.35);
}
.menu-item {
  height: 36px;
  display: flex;
  align-items: center;
  padding-left: 16px;
  color: #9a9a9a;
}
.menu-hover {
  background: #e6f2fc;
  color: #8a8f96;
}
.callout-box {
  position: absolute;
  left: 1751px;
  top: 427px;
  width: 128px;
  height: 217px;
  border: 5px solid #ffab00;
}
.callout-arrow {
  position: absolute;
  left: 0;
  top: 0;
  width: 1904px;
  height: 886px;
  pointer-events: none;
}
```
